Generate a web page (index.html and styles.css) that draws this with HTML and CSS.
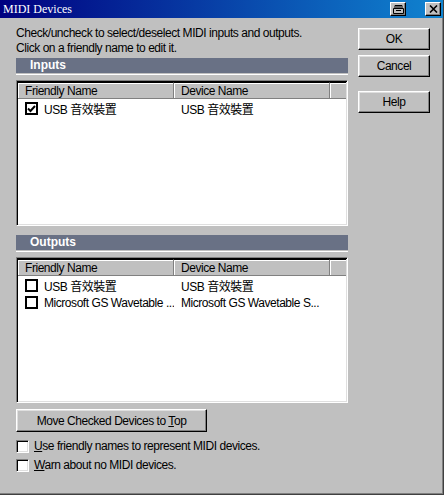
FILE: index.html
```html
<!DOCTYPE html>
<html>
<head>
<meta charset="utf-8">
<link rel="stylesheet" href="styles.css">
</head>
<body>
<div class="window">
  <div class="titlebar">
    <span class="title">MIDI Devices</span>
    <div class="tbtns">
      <span class="tbtn">
        <svg width="11" height="9" viewBox="0 0 11 9"><path d="M2 0.5h7v3h1.5v5h-10v-5h1.5z M2 3.5h7" fill="none" stroke="#000" stroke-width="1"/><rect x="3" y="5" width="5" height="1" fill="#000"/><rect x="3" y="1.5" width="5" height="1" fill="#000"/></svg>
      </span>
      <span class="tbtn close">
        <svg width="9" height="8" viewBox="0 0 9 8"><path d="M1 0.5l7 7M8 0.5l-7 7" stroke="#000" stroke-width="1.6"/></svg>
      </span>
    </div>
  </div>
  <div class="content">
    <div class="left">
      <p class="intro">Check/uncheck to select/deselect MIDI inputs and outputs.<br>Click on a friendly name to edit it.</p>
      <div class="bar">Inputs</div>
      <div class="list">
        <div class="head">
          <div class="hc c1">Friendly Name</div>
          <div class="hc c2">Device Name</div>
          <div class="hc c3"></div>
        </div>
        <div class="row">
          <div class="cell c1"><span class="lcb checked"><svg width="9" height="8" viewBox="0 0 9 8"><path d="M1 3.5l2.5 2.5l4.5-5" fill="none" stroke="#000" stroke-width="2"/></svg></span>USB 音效裝置</div>
          <div class="cell c2">USB 音效裝置</div>
        </div>
      </div>
      <div class="bar">Outputs</div>
      <div class="list">
        <div class="head">
          <div class="hc c1">Friendly Name</div>
          <div class="hc c2">Device Name</div>
          <div class="hc c3"></div>
        </div>
        <div class="row">
          <div class="cell c1"><span class="lcb"></span>USB 音效裝置</div>
          <div class="cell c2">USB 音效裝置</div>
        </div>
        <div class="row">
          <div class="cell c1"><span class="lcb"></span>Microsoft GS Wavetable ...</div>
          <div class="cell c2">Microsoft GS Wavetable S...</div>
        </div>
      </div>
      <button class="btn move">Move Checked Devices to <u>T</u>op</button>
      <label class="opt"><span class="cb"></span><span><u>U</u>se friendly names to represent MIDI devices.</span></label>
      <label class="opt"><span class="cb"></span><span><u>W</u>arn about no MIDI devices.</span></label>
    </div>
    <div class="right">
      <button class="btn side">OK</button>
      <button class="btn side">Cancel</button>
      <button class="btn side help">Help</button>
    </div>
  </div>
</div>
</body>
</html>
```
FILE: styles.css
```css
* { box-sizing: border-box; }
html, body { margin: 0; padding: 0; background: #c0c0c0; }
body {
  font-family: "Liberation Sans", Arial, "Noto Sans CJK TC", sans-serif;
  font-size: 12px;
  letter-spacing: -0.45px;
  color: #000;
}
.window {
  width: 444px;
  height: 495px;
  background: #c0c0c0;
  border-right: 1px solid #404040;
  border-bottom: 1px solid #404040;
  box-shadow: inset -1px -1px 0 #808080;
  display: flex;
  flex-direction: column;
}
.titlebar {
  height: 18px;
  background: linear-gradient(to right, #000080, #1084d0);
  display: flex;
  align-items: center;
  justify-content: space-between;
  padding: 0 2px 0 3px;
}
.title {
  color: #fff;
  font-family: "Liberation Serif", "Times New Roman", serif;
  font-size: 12px;
  letter-spacing: 0;
}
.tbtns { display: flex; gap: 19px; }
.tbtn {
  width: 16px;
  height: 14px;
  background: #c0c0c0;
  border-top: 1px solid #fff;
  border-left: 1px solid #fff;
  border-right: 1px solid #000;
  border-bottom: 1px solid #000;
  box-shadow: inset -1px -1px 0 #808080;
  display: flex;
  align-items: center;
  justify-content: center;
}
.tbtn svg { display: block; }
.content {
  display: flex;
  padding: 8px 0 0 16px;
}
.left { width: 332px; display: flex; flex-direction: column; }
.intro { margin: 0; line-height: 15px; }
.bar {
  margin-top: 2px;
  height: 15px;
  background: #697185;
  color: #fff;
  font-weight: bold;
  padding-left: 14px;
  line-height: 15px;
  letter-spacing: 0;
  box-shadow: 0 1px 0 #c0c0c0, 0 2px 0 #fff;
}
.list {
  margin-top: 7px;
  height: 146px;
  background: #fff;
  border-top: 1px solid #808080;
  border-left: 1px solid #808080;
  border-right: 1px solid #fff;
  border-bottom: 1px solid #fff;
  box-shadow: inset 1px 1px 0 #000, inset -1px -1px 0 #dfdfdf;
  padding: 1px;
}
.list + .bar { margin-top: 9px; }
.head { display: flex; height: 17px; }
.hc {
  background: #c0c0c0;
  border-top: 1px solid #000;
  border-right: 1px solid #808080;
  border-bottom: 1px solid #808080;
  box-shadow: inset 1px 1px 0 #fff;
  padding-left: 7px;
  line-height: 16px;
  white-space: nowrap;
}
.c1 { width: 156px; }
.c2 { width: 156px; }
.c3 { flex: 1; border-right: none; }
.row { display: flex; height: 17px; align-items: center; }
.head + .row { margin-top: 1px; }
.cell {
  display: flex;
  align-items: center;
  white-space: nowrap;
  overflow: hidden;
}
.cell.c1 { padding-left: 7px; }
.cell.c2 { padding-left: 7px; }
.lcb {
  width: 13px;
  height: 13px;
  border: 2px solid #000;
  background: #fff;
  margin-right: 6px;
  display: flex;
  align-items: center;
  justify-content: center;
  flex: none;
}
.lcb svg { display: block; }
.btn {
  font-family: "Liberation Sans", Arial, sans-serif;
  font-size: 12px;
  letter-spacing: -0.45px;
  color: #000;
  background: #c0c0c0;
  border-top: 1px solid #fff;
  border-left: 1px solid #fff;
  border-right: 1px solid #000;
  border-bottom: 1px solid #000;
  box-shadow: inset -1px -1px 0 #808080, inset 1px 1px 0 #dfdfdf;
  padding: 0;
  margin: 0;
}
.move {
  margin-top: 6px;
  width: 191px;
  height: 23px;
}
.opt {
  display: flex;
  align-items: center;
  margin-top: 7px;
  height: 14px;
}
.opt + .opt { margin-top: 5px; }
.cb {
  width: 13px;
  height: 13px;
  background: #fff;
  border-top: 1px solid #808080;
  border-left: 1px solid #808080;
  border-right: 1px solid #fff;
  border-bottom: 1px solid #fff;
  box-shadow: inset 1px 1px 0 #000, inset -1px -1px 0 #dfdfdf;
  margin-right: 5px;
  flex: none;
}
.right {
  margin-left: 10px;
  display: flex;
  flex-direction: column;
  padding-top: 2px;
}
.side {
  width: 72px;
  height: 22px;
  margin-bottom: 5px;
}
.side.help { margin-top: 9px; }
```
